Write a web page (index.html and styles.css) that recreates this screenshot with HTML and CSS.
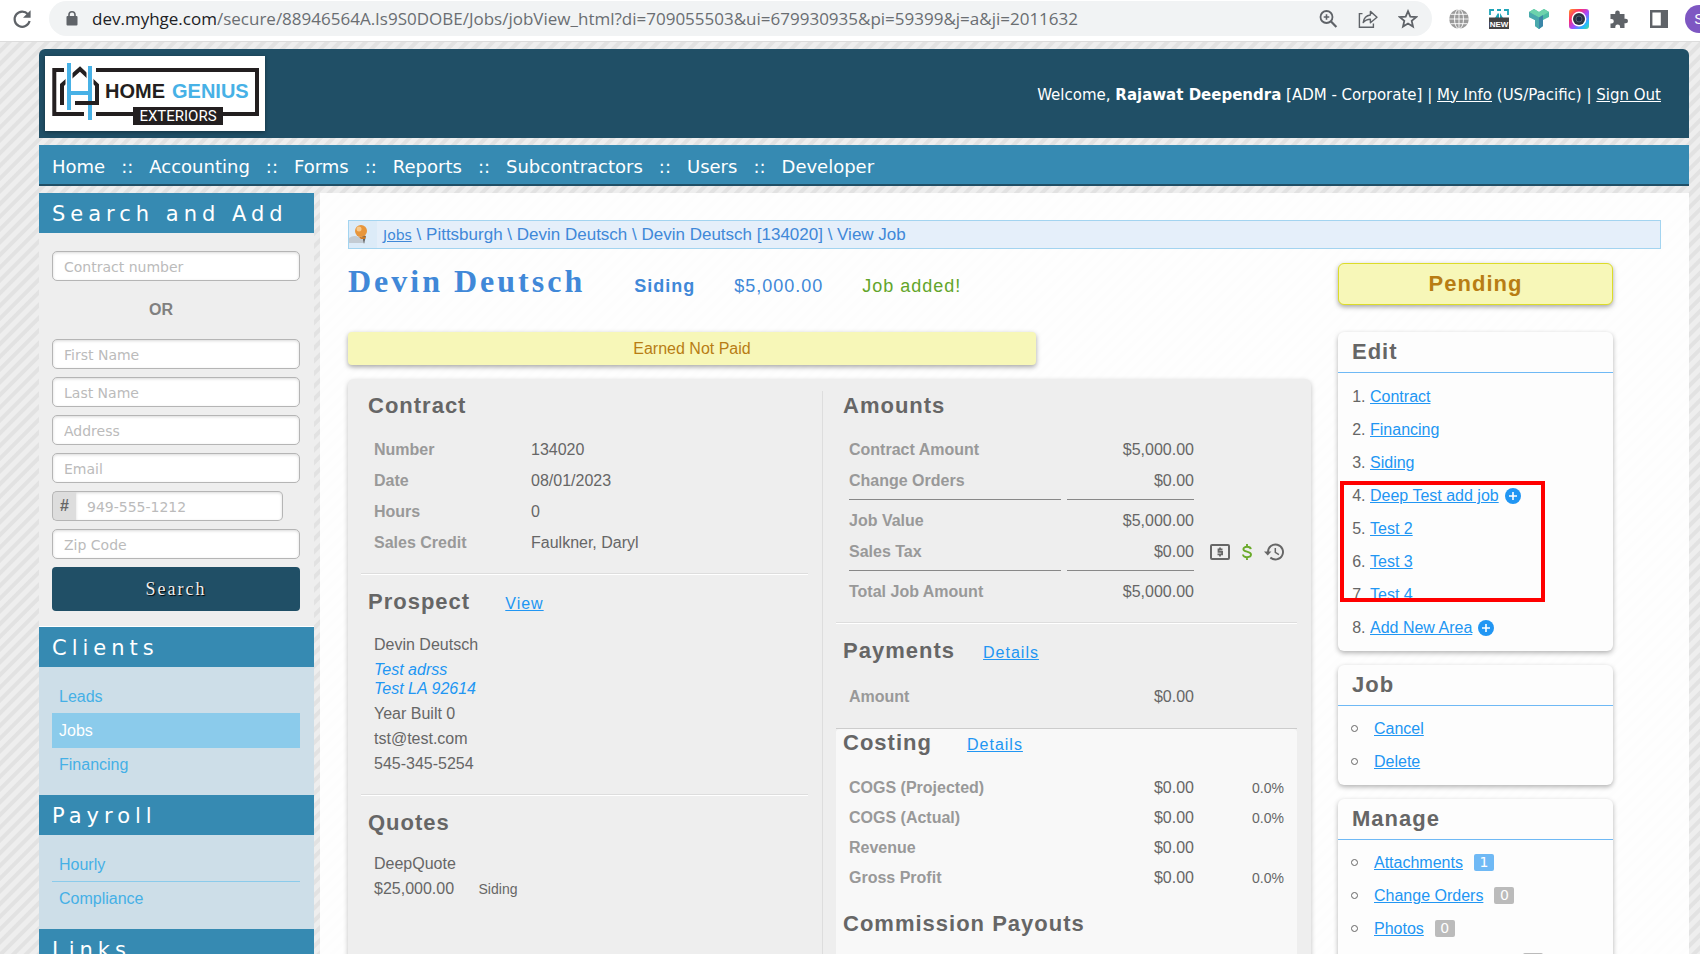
FILE: index.html
```html
<!DOCTYPE html>
<html lang="en">
<head>
  <meta charset="UTF-8">
  <meta name="viewport" content="width=device-width, initial-scale=1.0">
  <title>View Job</title>
  <link rel="stylesheet" href="styles.css">
</head>
<body>
  <!-- Browser bar -->
  <div class="toolbar">
    <button class="tool reload" aria-label="Reload"><svg width="20" height="20" viewBox="0 0 20 20"><path d="M16 5.2A7.6 7.6 0 1 0 17.6 12" fill="none" stroke="#5f6368" stroke-width="2.2"/><path d="M18.6 1.2v7.6H11z" fill="#5f6368"/></svg></button>
    <div class="omnibox">
      <svg class="lock" width="12" height="15" viewBox="0 0 12 15"><rect x="0.5" y="5" width="11" height="9.5" rx="1" fill="#5f6368"/><path d="M3 6V3.8a3 3 0 0 1 6 0V6" fill="none" stroke="#5f6368" stroke-width="1.6"/></svg>
      <div class="url"><span class="host">dev.myhge.com</span>/secure/88946564A.Is9S0DOBE/Jobs/jobView_html?di=709055503&amp;ui=679930935&amp;pi=59399&amp;j=a&amp;ji=2011632</div>
      <button class="tool" aria-label="Zoom"><svg width="20" height="20" viewBox="0 0 20 20"><circle cx="8.500" cy="8" r="6" fill="none" stroke="#5f6368" stroke-width="1.8"/><path d="M12.8 12.2L18.400 18" stroke="#5f6368" stroke-width="2.200"/><path d="M8.500 5.200v5.600M5.700 8h5.600" stroke="#5f6368" stroke-width="1.600"/></svg></button>
      <button class="tool" aria-label="Share"><svg width="20" height="20" viewBox="0 0 20 20"><path d="M4.500 4.600H1.400v13.600h14v-3.600" fill="none" stroke="#5f6368" stroke-width="1.400"/><path d="M5.200 13.600c.6-4.600 3-7.200 7.200-7.600V2.400l6.600 5.800-6.600 5.600v-3.600c-3.200 0-5.400 1-7.200 3.400z" fill="none" stroke="#5f6368" stroke-width="1.400" stroke-linejoin="round"/></svg></button>
      <button class="tool" aria-label="Bookmark"><svg width="20" height="20" viewBox="0 0 20 20"><path d="M10 2.200l2.300 5.400 5.800.5-4.400 3.800 1.300 5.700-5-3-5 3 1.300-5.700-4.400-3.800 5.800-.5z" fill="none" stroke="#5f6368" stroke-width="1.800"/></svg></button>
    </div>
    <div class="extensions">
      <svg width="20" height="20" viewBox="0 0 20 20"><circle cx="10" cy="10" r="9.800" fill="#9a9a9a"/><g fill="none" stroke="#fff" stroke-width="0.9"><ellipse cx="10" cy="10" rx="4.500" ry="9.800"/><path d="M10 0v20M0 10h20M1.500 5.300h17M1.500 14.700h17"/></g></svg>
      <svg width="20" height="20" viewBox="0 0 20 20"><path d="M1 6V1h4M8 1h4M15 1h4v5" fill="none" stroke="#1fa5b8" stroke-width="1.800"/><path d="M6 9l3-5 1 1v4zM11 9V4l3 5z" fill="#1fa5b8"/><rect y="8.500" width="20" height="11.500" fill="#444"/><text x="10" y="17.500" text-anchor="middle" class="new-text">NEW</text></svg>
      <svg width="20" height="20" viewBox="0 0 20 20"><path d="M5 0l5 3 5-3 5 3v5l-6 3v6l-4 3-4-3v-6L0 8V3z" fill="#4dbba6"/><path d="M0 3l5-3 5 3 5-3 5 3-10 5.500z" fill="#6dd3ac"/><path d="M10 8.500V20l-4-3v-6L0 8V3z" fill="#4aa9ad"/><path d="M10 8.500l4-2.500v11l-4 3z" fill="#3b86a8"/></svg>
      <svg width="20" height="20" viewBox="0 0 20 20"><defs><linearGradient id="rainbow" x1="0" y1="0" x2="1" y2="1"><stop offset="0" stop-color="#ff9a1f"/><stop offset="0.300" stop-color="#ff2d6f"/><stop offset="0.550" stop-color="#a44bff"/><stop offset="0.800" stop-color="#22b8ff"/><stop offset="1" stop-color="#4be08a"/></linearGradient></defs><rect width="20" height="20" rx="3" fill="url(#rainbow)"/><circle cx="10" cy="10" r="7.400" fill="#fff"/><circle cx="10" cy="10" r="6" fill="#2c3440"/><circle cx="10" cy="10" r="3" fill="#1c2a44" stroke="#53606e"/></svg>
      <svg width="20" height="20" viewBox="0 0 20 20"><path d="M1.500 5h4.700V3.700a2.300 2.300 0 0 1 4.600 0V5h4.700v4.700h1.200a2.300 2.300 0 0 1 0 4.600h-1.200V19h-4.400v-1.200a2.400 2.400 0 0 0-4.800 0V19H1.500v-4.500h1a2.300 2.300 0 0 0 0-4.600h-1z" fill="#5f6368"/></svg>
      <svg width="20" height="20" viewBox="0 0 20 20"><path d="M1 1h18v18H1zM3.400 3.400v13.200h8.400V3.400z" fill="#5f6368" fill-rule="evenodd"/></svg>
      <span class="avatar">S</span>
    </div>
  </div>

  <div class="page">
    <header class="banner">
      <div class="logo">
        <svg width="220" height="75" viewBox="0 0 220 75">
          <g fill="none" stroke="#231f20" stroke-width="4">
            <path d="M19 14H9.300v44H39M51 14H212v44H51"/>
            <path d="M17 49V29l18-16 17 16v18H30"/>
          </g>
          <path d="M24 7v47M45 10v54" stroke="#fff" stroke-width="7"/>
          <path d="M24 7v47M45 10v54M24 37h21" stroke="#47b1e6" stroke-width="4"/>
          <path d="M30 47h22" stroke="#231f20" stroke-width="4"/>
          <rect x="88" y="51" width="90" height="18" fill="#231f20"/>
          <text x="60" y="42" class="logo-home">HOME</text>
          <text x="127" y="42" class="logo-genius">GENIUS</text>
          <text x="133" y="65" text-anchor="middle" class="logo-ext">EXTERIORS</text>
        </svg>
      </div>
      <div class="welcome">Welcome, <b>Rajawat Deependra</b> [ADM - Corporate] | <a href="#">My Info</a> (US/Pacific) | <a href="#">Sign Out</a></div>
    </header>

    <nav class="main-nav">
      <a href="#">Home</a><span>::</span>
      <a href="#">Accounting</a><span>::</span>
      <a href="#">Forms</a><span>::</span>
      <a href="#">Reports</a><span>::</span>
      <a href="#">Subcontractors</a><span>::</span>
      <a href="#">Users</a><span>::</span>
      <a href="#">Developer</a>
    </nav>

    <div class="columns">
      <!-- Left menu -->
      <div class="sidebar">
        <h2>Search and Add</h2>
        <form class="search-form">
          <input type="text" placeholder="Contract number" aria-label="Contract number">
          <div class="or">OR</div>
          <input type="text" placeholder="First Name" aria-label="First Name">
          <input type="text" placeholder="Last Name" aria-label="Last Name">
          <input type="text" placeholder="Address" aria-label="Address">
          <input type="text" placeholder="Email" aria-label="Email">
          <div class="phone">
            <label for="phone">#</label>
            <input type="text" id="phone" placeholder="949-555-1212">
          </div>
          <input type="text" placeholder="Zip Code" aria-label="Zip Code">
          <button type="button" class="search-button">Search</button>
        </form>
        <h2>Clients</h2>
        <div class="menu">
          <a href="#">Leads</a>
          <a href="#" class="active">Jobs</a>
          <a href="#">Financing</a>
        </div>
        <h2>Payroll</h2>
        <div class="menu">
          <a href="#">Hourly</a>
          <a href="#">Compliance</a>
        </div>
        <h2>Links</h2>
      </div>

      <main class="content">
        <div class="breadcrumb">
          <svg class="pin" width="28" height="27" viewBox="0 0 28 27"><rect width="28" height="27" fill="#dcebf8"/><path d="M0 17c4-3 9-3 14 2l2 3H0z" fill="#c3cbd3"/><path d="M13 15l2 8 2-8z" fill="#666"/><path d="M8 14c3 3 8 3 9 0l-1 4h-4z" fill="#d07a22"/><circle cx="12" cy="10" r="6" fill="#e8963c"/><circle cx="10" cy="8" r="2.500" fill="#f8c98b"/></svg>
          <div><a href="#">Jobs</a> \ Pittsburgh \ Devin Deutsch \ Devin Deutsch [134020] \ View Job</div>
        </div>

        <div class="job">
          <div class="job-main">
            <div class="title-row">
              <h1>Devin Deutsch</h1>
              <b>Siding</b>
              <span>$5,000.00</span>
              <span class="added">Job added!</span>
            </div>
            <div class="notice">Earned Not Paid</div>

            <div class="card">
              <div class="col">
                <section>
                  <h3>Contract</h3>
                  <table class="contract">
                    <tr><th>Number</th><td>134020</td></tr>
                    <tr><th>Date</th><td>08/01/2023</td></tr>
                    <tr><th>Hours</th><td>0</td></tr>
                    <tr><th>Sales Credit</th><td>Faulkner, Daryl</td></tr>
                  </table>
                </section>
                <section>
                  <h3>Prospect <a href="#">View</a></h3>
                  <div class="lines">
                    <p>Devin Deutsch</p>
                    <p><a href="#" class="address">Test adrss<br>Test LA 92614</a></p>
                    <p>Year Built 0</p>
                    <p>tst@test.com</p>
                    <p>545-345-5254</p>
                  </div>
                </section>
                <section class="last">
                  <h3>Quotes</h3>
                  <div class="lines">
                    <p>DeepQuote</p>
                    <p>$25,000.00 <small>Siding</small></p>
                  </div>
                </section>
              </div>

              <div class="col col-right">
                <section>
                  <h3>Amounts</h3>
                  <table class="money">
                    <tr><th>Contract Amount</th><td>$5,000.00</td><td class="extra"></td></tr>
                    <tr class="line"><th>Change Orders</th><td>$0.00</td></tr>
                    <tr class="after"><th>Job Value</th><td>$5,000.00</td></tr>
                    <tr class="line"><th>Sales Tax</th><td>$0.00</td><td class="extra">
                      <div class="tax-icons">
                        <svg width="20" height="16" viewBox="0 0 20 16"><rect x="1" y="1" width="18" height="14" rx="1" fill="none" stroke="#666" stroke-width="2"/><path d="M12.500 5.500h-4v2.400h3.600v2.500H7.500M10 3.600v1.900M10 10.400v2" fill="none" stroke="#666" stroke-width="1.800"/></svg>
                        <svg width="10" height="16" viewBox="0 0 10 16"><path d="M8.800 5.200C8.600 3.600 7.200 2.800 5 2.800S1.400 3.700 1.400 5.200C1.400 8.600 9 6.600 9 10.600c0 1.700-1.700 2.600-4 2.600S1 12.200 1 10.600M5 0v3M5 13v3" fill="none" stroke="#6aaa2a" stroke-width="1.900"/></svg>
                        <svg width="20" height="18" viewBox="0 0 20 18"><path d="M4 9a7.500 7.500 0 1 1 2.400 5.500" fill="none" stroke="#666" stroke-width="1.900"/><path d="M0 8.500h7.400L3.700 12.600z" fill="#666"/><path d="M11.300 5v4.400l3.600 2.200" fill="none" stroke="#666" stroke-width="1.500"/></svg>
                      </div>
                    </td></tr>
                    <tr class="after"><th>Total Job Amount</th><td>$5,000.00</td></tr>
                  </table>
                </section>
                <section class="payments">
                  <h3>Payments <a href="#">Details</a></h3>
                  <table class="money">
                    <tr><th>Amount</th><td>$0.00</td></tr>
                  </table>
                </section>
                <section class="costing">
                  <h3>Costing <a href="#">Details</a></h3>
                  <table class="money">
                    <tr><th>COGS (Projected)</th><td>$0.00</td><td class="extra">0.0%</td></tr>
                    <tr><th>COGS (Actual)</th><td>$0.00</td><td class="extra">0.0%</td></tr>
                    <tr><th>Revenue</th><td>$0.00</td><td class="extra"></td></tr>
                    <tr><th>Gross Profit</th><td>$0.00</td><td class="extra">0.0%</td></tr>
                  </table>
                  <h3 class="payouts">Commission Payouts</h3>
                </section>
              </div>
            </div>
          </div>

          <aside>
            <div class="status">Pending</div>
            <div class="panel">
              <h3>Edit</h3>
              <ol>
                <li><a href="#">Contract</a></li>
                <li><a href="#">Financing</a></li>
                <li><a href="#">Siding</a></li>
                <li><a href="#">Deep Test add job</a><svg class="plus" width="16" height="16" viewBox="0 0 16 16"><circle cx="8" cy="8" r="8" fill="#2196f3"/><path d="M8 4v8M4 8h8" stroke="#fff" stroke-width="1.600"/></svg></li>
                <li><a href="#">Test 2</a></li>
                <li><a href="#">Test 3</a></li>
                <li><a href="#">Test 4</a></li>
                <li><a href="#">Add New Area</a><svg class="plus" width="16" height="16" viewBox="0 0 16 16"><circle cx="8" cy="8" r="8" fill="#2196f3"/><path d="M8 4v8M4 8h8" stroke="#fff" stroke-width="1.600"/></svg></li>
              </ol>
              <div class="highlight"></div>
            </div>
            <div class="panel">
              <h3>Job</h3>
              <ul>
                <li><a href="#">Cancel</a></li>
                <li><a href="#">Delete</a></li>
              </ul>
            </div>
            <div class="panel">
              <h3>Manage</h3>
              <ul>
                <li><a href="#">Attachments</a><span class="badge on">1</span></li>
                <li><a href="#">Change Orders</a><span class="badge">0</span></li>
                <li><a href="#">Photos</a><span class="badge">0</span></li>
                <li><span class="badge next"></span></li>
              </ul>
            </div>
          </aside>
        </div>
      </main>
    </div>
  </div>
</body>
</html>
```

FILE: styles.css
```css
* {
  box-sizing: border-box;
}

body {
  margin: 0;
  height: 100vh;
  display: flex;
  flex-direction: column;
  overflow: hidden;
  font-family: "Liberation Sans", Arial, sans-serif;
  font-size: 16px;
  color: #666;
}

a {
  color: #2196f3;
}

h1, h2, h3, p, ol, ul {
  margin: 0;
}

/* Browser bar */
.toolbar {
  display: flex;
  align-items: center;
  flex: none;
  height: 42px;
  padding: 0 0 4px 12px;
  background: #fff;
  border-bottom: 1px solid #dcdcdc;
}

.tool {
  display: flex;
  padding: 0;
  border: none;
  background: none;
}

.omnibox {
  display: flex;
  align-items: center;
  flex: 1;
  gap: 20px;
  height: 35px;
  margin-left: 17px;
  padding: 0 14px 0 17px;
  border-radius: 18px;
  background: #f1f3f4;
}

.url {
  flex: 1;
  margin-left: -6px;
  font-family: "Open Sans", "Noto Sans", sans-serif;
  font-size: 17px;
  white-space: nowrap;
  color: #6a6e72;
}

.host {
  color: #202124;
}

.extensions {
  display: flex;
  align-items: center;
  gap: 20px;
  width: 268px;
  padding-left: 17px;
  overflow: hidden;
}

.extensions svg {
  flex: none;
}

.new-text {
  font: bold 8px "Liberation Sans", sans-serif;
  fill: #fff;
}

.avatar {
  flex: none;
  width: 28px;
  margin-left: -4px;
  border-radius: 14px;
  background: #7e57c2;
  color: #fff;
  font-size: 14px;
  line-height: 28px;
  text-align: center;
}

/* Page */
.page {
  flex: 1;
  min-height: 0;
  overflow: hidden;
  padding: 7px 11px 0 39px;
  background: repeating-linear-gradient(135deg, #eee 0, #eee 4px, #e2e2e2 5px, #e2e2e2 8px, #eee 9px);
}

.banner {
  display: flex;
  align-items: center;
  justify-content: space-between;
  height: 89px;
  padding: 0 28px 0 6px;
  border-radius: 6px 6px 0 0;
  background: #204f66;
}

.logo {
  height: 75px;
  background: #fff;
  box-shadow: 0 1px 4px rgba(0, 0, 0, 0.4);
}

.logo-home,
.logo-genius {
  font: bold 20px "Liberation Sans", Arial, sans-serif;
  fill: #231f20;
}

.logo-genius {
  fill: #47b1e6;
}

.logo-ext {
  font: 15px Roboto, sans-serif;
  fill: #fff;
}

.welcome {
  padding-top: 2px;
  font-family: "DejaVu Sans", Verdana, sans-serif;
  font-size: 15px;
  color: #fff;
}

.welcome a {
  color: #fff;
}

.main-nav {
  display: flex;
  align-items: center;
  gap: 16px;
  height: 41px;
  margin: 7px 0;
  padding: 3px 13px 0;
  background: #368ab2;
  border-bottom: 2px solid #204f66;
  font-family: "DejaVu Sans", Verdana, sans-serif;
  font-size: 18px;
  color: #fff;
}

.main-nav a {
  color: #fff;
  text-decoration: none;
}

.columns {
  display: flex;
  gap: 6px;
}

/* Left menu */
.sidebar {
  flex: none;
  width: 275px;
}

.sidebar h2 {
  padding: 2px 0 0 13px;
  background: #368ab2;
  color: #fff;
  font: 21px/38px "DejaVu Sans", Verdana, sans-serif;
  letter-spacing: 5px;
}

.search-form {
  display: flex;
  flex-direction: column;
  gap: 8px;
  padding: 18px 14px 15px 13px;
  background: #eee;
  border-bottom: 1px solid #fff;
}

.search-form input {
  height: 30px;
  padding: 1px 11px 0;
  border: 1px solid #b5b5b5;
  border-radius: 5px;
  box-shadow: inset 0 1px 3px rgba(0, 0, 0, 0.15);
  background: #fff;
  font: 14px "DejaVu Sans", Verdana, sans-serif;
}

.search-form input::placeholder {
  color: #bbb;
}

.or {
  padding: 12px 30px 12px 0;
  line-height: 18px;
  font-weight: bold;
  text-align: center;
  color: #808080;
}

.phone {
  display: flex;
  width: 231px;
}

.phone label {
  width: 24px;
  border: 1px solid #b5b5b5;
  border-right: none;
  border-radius: 5px 0 0 5px;
  background: #ddd;
  line-height: 28px;
  font-weight: bold;
  text-align: center;
}

.phone input {
  flex: 1;
  min-width: 0;
  border-left: none;
  border-radius: 0 5px 5px 0;
}

.search-button {
  height: 44px;
  border: none;
  border-radius: 4px;
  background: #204f66;
  color: #eee;
  font: 18px "Liberation Serif", serif;
  letter-spacing: 2px;
  text-shadow: 1px 1px 1px #000;
}

.menu {
  padding: 13px 14px 13px 13px;
  background: #cddee8;
}

.menu a {
  display: block;
  padding-left: 7px;
  border-bottom: 1px solid #8bcbeb;
  line-height: 33px;
  color: #45b0e6;
  text-decoration: none;
}

.menu a:last-child {
  border-bottom-color: transparent;
}

.menu .active {
  background: #8bcbeb;
  color: #fff;
}

/* Content */
.content {
  flex: 1;
  min-width: 0;
  padding: 27px 28px;
  background: rgba(255, 255, 255, 0.92);
}

.breadcrumb {
  display: flex;
  align-items: center;
  gap: 6px;
  height: 29px;
  margin-bottom: 14px;
  border: 1px solid #a3d4f0;
  background: #e5effa;
  color: #4088d8;
  font-size: 17px;
}

.breadcrumb a {
  color: #4088d8;
  font-family: "DejaVu Sans", Verdana, sans-serif;
  font-size: 14px;
}

.job {
  display: flex;
  gap: 27px;
  padding-right: 48px;
}

.job-main {
  flex: 1;
  min-width: 0;
}

.title-row {
  display: flex;
  align-items: baseline;
  height: 69px;
  font-size: 18px;
  letter-spacing: 1px;
  color: #4088d8;
}

.title-row h1 {
  margin-right: 10px;
  font: bold 32px/37px "Liberation Serif", serif;
  letter-spacing: 3px;
}

.title-row b,
.title-row span {
  margin-left: 39px;
}

.title-row .added {
  color: #62a52a;
}

.notice {
  width: 688px;
  max-width: 100%;
  margin-bottom: 14px;
  border-radius: 4px;
  background: #f7f7b8;
  box-shadow: 0 2px 5px rgba(0, 0, 0, 0.35);
  color: #b87d14;
  line-height: 33px;
  text-align: center;
}

.card {
  display: grid;
  grid-template-columns: 474fr 489fr;
  padding-top: 12px;
  border-radius: 6px;
  background: #eee;
  box-shadow: 0 2px 5px rgba(0, 0, 0, 0.25);
}

.col {
  padding: 0 14px 0 13px;
}

.col-right {
  border-left: 1px solid #ddd;
}

section {
  padding-bottom: 15px;
  margin-bottom: 13px;
  border-bottom: 1px solid #ddd;
  box-shadow: 0 1px 0 #fff;
}

section h3 {
  padding: 2px 0 0 7px;
  margin-bottom: 15px;
  font-size: 22px;
  line-height: 26px;
  letter-spacing: 1px;
}

section h3 a {
  margin-left: 28px;
  font-size: 16px;
  font-weight: normal;
}

.last {
  border: none;
  box-shadow: none;
}

table {
  margin-left: 7px;
  border-spacing: 6px 0;
}

th, td {
  padding: 0;
  height: 31px;
  text-align: left;
}

th {
  color: #999;
}

.contract th {
  width: 151px;
}

.money th {
  width: 212px;
}

.money td {
  width: 127px;
  text-align: right;
}

.money .extra {
  width: 84px;
  font-size: 14px;
}

.line th,
.line td {
  height: 35px;
  padding-bottom: 3px;
  border-bottom: 1px solid #888;
}

.line .extra {
  border: none;
}

.after th,
.after td {
  height: 36px;
  padding-top: 5px;
}

.tax-icons {
  display: flex;
  align-items: center;
  justify-content: flex-end;
  gap: 12px;
}

.lines {
  padding: 3px 0 0 13px;
  line-height: 19px;
}

.lines p {
  margin-bottom: 6px;
}

.lines small {
  margin-left: 20px;
  font-size: 14px;
}

.address {
  font-style: italic;
  text-decoration: none;
}

.payments {
  padding-bottom: 16px;
  margin-bottom: 0;
  border-bottom: 1px solid #ccc;
  box-shadow: none;
}

.payments h3 a {
  margin-left: 21px;
}

.costing {
  margin: 0;
  padding-bottom: 60px;
  border: none;
  border-radius: 4px;
  background: #f8f8f8;
}

.costing h3 {
  padding-top: 1px;
}

.costing th,
.costing td {
  height: 30px;
}

.costing .payouts {
  padding-top: 18px;
}

/* Right panels */
aside {
  flex: none;
  width: 275px;
}

.status {
  margin-bottom: 27px;
  border: 1px solid #dcdc28;
  border-radius: 6px;
  background: #f7f7b8;
  box-shadow: 0 2px 5px rgba(0, 0, 0, 0.35);
  color: #b87d14;
  font-size: 22px;
  font-weight: bold;
  line-height: 40px;
  letter-spacing: 1px;
  text-align: center;
}

.panel {
  position: relative;
  margin-bottom: 14px;
  border-radius: 6px;
  box-shadow: 0 2px 5px rgba(0, 0, 0, 0.3);
  background: #fdfdfd;
}

.panel h3 {
  padding: 1px 14px;
  border-bottom: 1px solid #6fb9f5;
  font-size: 22px;
  line-height: 38px;
  letter-spacing: 1px;
}

.panel ol,
.panel ul {
  padding: 7px 0 7px 32px;
  line-height: 33px;
}

.panel ul {
  padding: 6px 0 7px 13px;
  list-style: none;
}

.panel ul li {
  display: flex;
  align-items: center;
  min-height: 33px;
}

.panel ul li::before {
  content: "";
  width: 5px;
  height: 5px;
  margin-right: 16px;
  border: 1px solid #666;
  border-radius: 50%;
}

.plus {
  margin-left: 6px;
  vertical-align: -3px;
}

.badge {
  width: 20px;
  height: 17px;
  margin-left: 11px;
  border-radius: 2px;
  background: #bbb;
  color: #fff;
  font: 14px/17px "DejaVu Sans", Verdana, sans-serif;
  text-align: center;
}

.badge.on {
  background: #6fb9f5;
}

.badge.next {
  margin-left: 149px;
}

/* Red marker around the new areas */
.highlight {
  position: absolute;
  top: 149px;
  left: 2px;
  width: 205px;
  height: 121px;
  border: 4px solid #f00;
}
```
